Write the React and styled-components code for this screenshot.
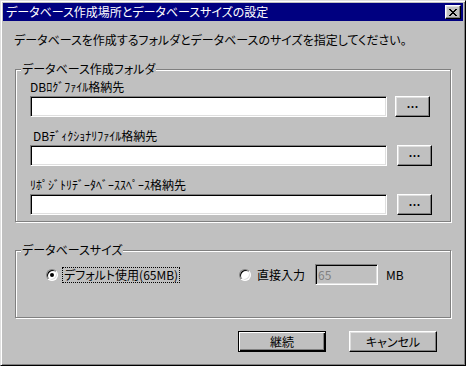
import React from 'react'
import styled, { createGlobalStyle } from 'styled-components'

const GlobalStyle = createGlobalStyle`
    html, body {
        margin: 0;
        padding: 0;
        background: #c0c0c0;
    }
    body {
        font-family: "Noto Sans CJK JP", "Noto Sans", sans-serif;
        font-size: 12px;
        color: #000;
    }
    * {
        box-sizing: border-box;
    }
`

const fields = [
    { label: 'DBﾛｸﾞﾌｧｲﾙ格納先', indent: 0, shift: 0 },
    { label: 'DBﾃﾞｨｸｼｮﾅﾘﾌｧｲﾙ格納先', indent: 3, shift: 2 },
    { label: 'ﾘﾎﾟｼﾞﾄﾘﾃﾞｰﾀﾍﾞｰｽｽﾍﾟｰｽ格納先', indent: 0, shift: 2 },
]

const App = () => {
    return (
        <>
            <GlobalStyle />
            <Window>
                <TitleBar>
                    <Title>データベース作成場所とデータベースサイズの設定</Title>
                    <CloseButton aria-label="閉じる">
                        <svg width="8" height="7" viewBox="0 0 8 7">
                            <path
                                d="M0 0h2l2 2.5L6 0h2L5 3.5 8 7H6L4 4.5 2 7H0l3-3.5z"
                                fill="#000"
                            />
                        </svg>
                    </CloseButton>
                </TitleBar>
                <Body>
                    <Description>
                        データベースを作成するフォルダとデータベースのサイズを指定してください。
                    </Description>

                    <Group $height={153} $top={22}>
                        <Legend>データベース作成フォルダ</Legend>
                        <FieldList>
                            {fields.map(f => (
                                <Field key={f.label}>
                                    <FieldLabel $indent={f.indent}>{f.label}</FieldLabel>
                                    <InputRow $shift={f.shift}>
                                        <TextBox />
                                        <BrowseButton>…</BrowseButton>
                                    </InputRow>
                                </Field>
                            ))}
                        </FieldList>
                    </Group>

                    <Group $height={68} $top={28}>
                        <Legend>データベースサイズ</Legend>
                        <SizeRow>
                            <Option $width={193}>
                                <Radio $checked />
                                <OptionLabel $focused>デフォルト使用(65MB)</OptionLabel>
                            </Option>
                            <Option $width={76}>
                                <Radio />
                                <OptionLabel>直接入力</OptionLabel>
                            </Option>
                            <SizeBox disabled value="65" readOnly />
                            <Unit>MB</Unit>
                        </SizeRow>
                    </Group>

                    <Footer>
                        <PushButton $default>継続</PushButton>
                        <PushButton>キャンセル</PushButton>
                    </Footer>
                </Body>
            </Window>
        </>
    )
}

export default App


const Window = styled.div`
    width: 466px;
    height: 366px;
    background: #c0c0c0;
    border: 1px solid;
    border-color: #dfdfdf #000 #000 #dfdfdf;
    box-shadow: inset 1px 1px #fff, inset -1px -1px #808080;
    padding: 2px;
    display: flex;
    flex-direction: column;
    line-height: 14px;
    font-feature-settings: "palt";
`

const TitleBar = styled.div`
    height: 18px;
    background: #000080;
    color: #fff;
    display: flex;
    align-items: center;
    justify-content: space-between;
    padding: 0 2px 0 3px;
`

const Title = styled.span`
    font-size: 12px;
    white-space: nowrap;
`

const CloseButton = styled.button`
    width: 16px;
    height: 14px;
    padding: 0;
    background: #c0c0c0;
    border: 1px solid;
    border-color: #fff #000 #000 #fff;
    box-shadow: inset -1px -1px #808080, inset 1px 1px #dfdfdf;
    display: flex;
    align-items: center;
    justify-content: center;
    svg {
        display: block;
        shape-rendering: crispEdges;
    }
`

const Body = styled.div`
    flex: 1;
    display: flex;
    flex-direction: column;
    padding: 0 12px;
`

const Description = styled.p`
    margin: 12px 0 0 -1px;
    white-space: nowrap;
`

const Group = styled.div`
    position: relative;
    height: ${p => p.$height}px;
    margin-top: ${p => p.$top}px;
    border: 1px solid #808080;
    box-shadow: inset 1px 1px #fff, 1px 1px #fff;
`

const Legend = styled.span`
    position: absolute;
    top: -8px;
    left: 5px;
    padding: 0 1px;
    background: #c0c0c0;
    white-space: nowrap;
`

const FieldList = styled.div`
    display: flex;
    flex-direction: column;
    gap: 12px;
    padding: 10px 0 0 14px;
`

const Field = styled.div`
    display: flex;
    flex-direction: column;
    gap: 2px;
`

const FieldLabel = styled.span`
    padding-left: ${p => p.$indent}px;
    white-space: nowrap;
`

const InputRow = styled.div`
    display: flex;
    gap: ${p => 8 + p.$shift}px;
`

const sunken = `
    border: 1px solid;
    border-color: #808080 #fff #fff #808080;
    box-shadow: inset 1px 1px #000, inset -1px -1px #dfdfdf;
    outline: none;
`

const raised = `
    border: 1px solid;
    border-color: #fff #000 #000 #fff;
    box-shadow: inset -1px -1px #808080, inset 1px 1px #dfdfdf;
`

const TextBox = styled.input`
    ${sunken}
    width: 357px;
    height: 21px;
    background: #fff;
    padding: 0 3px;
    font: inherit;
`

const BrowseButton = styled.button`
    ${raised}
    width: 35px;
    height: 21px;
    padding: 0;
    background: #c0c0c0;
    font-family: "Noto Sans CJK JP", sans-serif;
    font-size: 12px;
    font-weight: bold;
    line-height: 1;
    color: #000;
`

const SizeRow = styled.div`
    display: flex;
    align-items: center;
    height: 21px;
    margin-top: 13px;
    padding-left: 30px;
`

const Option = styled.label`
    width: ${p => p.$width}px;
    display: flex;
    align-items: center;
    gap: 4px;
    flex-shrink: 0;
`

const Radio = styled.span`
    position: relative;
    width: 12px;
    height: 12px;
    flex-shrink: 0;
    border-radius: 50%;
    background: #fff;
    border: 1px solid;
    border-color: #808080 #fff #fff #808080;
    box-shadow: inset 1px 1px #000, inset -1px -1px #dfdfdf;
    &::after {
        content: "";
        display: ${p => (p.$checked ? 'block' : 'none')};
        position: absolute;
        left: 3px;
        top: 3px;
        width: 4px;
        height: 4px;
        border-radius: 50%;
        background: #000;
    }
`

const OptionLabel = styled.span`
    padding: 0 1px;
    border: 1px dotted ${p => (p.$focused ? '#000' : 'transparent')};
    white-space: nowrap;
`

const SizeBox = styled.input`
    ${sunken}
    width: 63px;
    height: 21px;
    padding: 0 2px;
    background: #c0c0c0;
    color: #808080;
    font: inherit;
`

const Unit = styled.span`
    margin-left: 8px;
`

const Footer = styled.div`
    display: flex;
    justify-content: flex-end;
    gap: 23px;
    margin-top: 13px;
    padding-right: 14px;
`

const PushButton = styled.button`
    width: 88px;
    height: 21px;
    padding: 0;
    background: #c0c0c0;
    font: inherit;
    color: #000;
    border: 1px solid;
    border-color: ${p => (p.$default ? '#000' : '#fff #000 #000 #fff')};
    box-shadow: ${p =>
        p.$default
            ? 'inset 1px 1px #fff, inset -1px -1px #000, inset -2px -2px #808080'
            : 'inset -1px -1px #808080, inset 1px 1px #dfdfdf'};
`
